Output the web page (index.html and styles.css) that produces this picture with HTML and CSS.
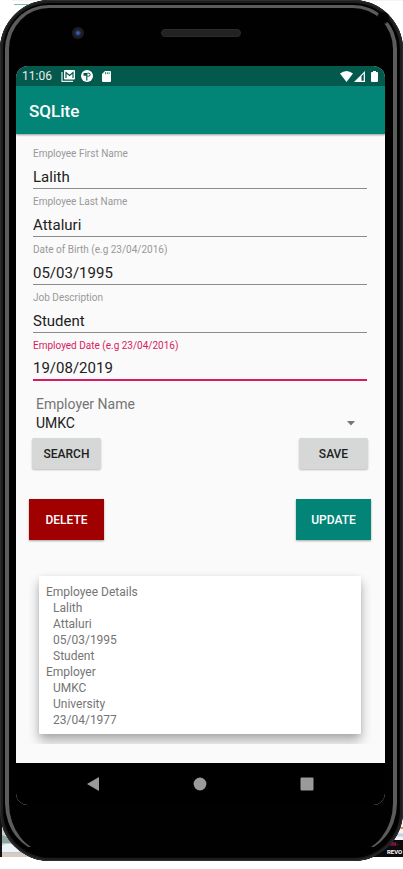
FILE: index.html
```html
<!DOCTYPE html>
<html lang="en">
<head>
<meta charset="utf-8">
<meta name="viewport" content="width=device-width, initial-scale=1">
<title>SQLite</title>
<link rel="stylesheet" href="styles.css">
</head>
<body>
<div class="stage">
  <div class="backdrop-top" aria-hidden="true"></div>
  <svg class="backdrop backdrop-left" width="45" height="42" viewBox="0 0 45 42" aria-hidden="true">
    <rect width="2" height="42" fill="#111"/>
    <rect x="2" width="43" height="42" fill="#c9cfce"/>
    <path d="M2 20l10 4 8 10H2z" fill="#8fa69b"/>
    <path d="M2 28h43v14H2z" fill="#b9c9dc"/>
    <path d="M2 30q12-4 24 4l-8 3H2z" fill="#eef3f6"/>
    <path d="M2 38h28v4H2z" fill="#d9c9be"/>
  </svg>
  <svg class="backdrop backdrop-right" width="45" height="42" viewBox="0 0 45 42" aria-hidden="true">
    <rect width="45" height="25" fill="#f4f4f6"/>
    <path d="M37 13h8" stroke="#e08a63" stroke-width="2"/>
    <path d="M34 20h11" stroke="#bcd3ea" stroke-width="3"/>
    <rect y="25" width="45" height="17" fill="#0c0a0d"/>
    <text x="32" y="31" class="poster pink">IN-</text>
    <text x="29" y="39" class="poster">REVO</text>
  </svg>
  <div class="phone">
    <div class="rim" aria-hidden="true"></div>
    <div class="bezel" aria-hidden="true">
      <span class="camera"></span>
      <span class="speaker"></span>
      <span></span>
    </div>
    <div class="screen">
      <div class="status">
        <span class="clock">11:06</span>
        <svg width="14" height="12" viewBox="0 0 14 12" aria-hidden="true">
          <path d="M1 2v9.300h11" fill="none" stroke="#e6efed" stroke-width="1.200"/>
          <rect x="3" y="0" width="11" height="9.500" rx="1" fill="#fff"/>
          <path d="M5 8V2.500l3.500 3 3.500-3V8" fill="none" stroke="#04594d" stroke-width="1.200"/>
        </svg>
        <svg width="12" height="12" viewBox="0 0 12 12" aria-hidden="true">
          <circle cx="6" cy="6" r="6" fill="#fff"/>
          <path d="M2.500 3h2.700v2.800H2.500zM5.200 3h1.200v7.500H5.200z" fill="#04594d"/>
          <path d="M6.400 3.200h1.300a1.500 1.500 0 0 1 0 3H6.400" fill="none" stroke="#04594d" stroke-width="1"/>
        </svg>
        <svg class="sd" width="9" height="11" viewBox="0 0 9 11" aria-hidden="true">
          <path d="M3 0h5a1 1 0 0 1 1 1v9a1 1 0 0 1-1 1H1a1 1 0 0 1-1-1V3z" fill="#fff"/>
          <path d="M3.500 1.200v2M5.300 1.200v2M7.100 1.200v2" stroke="#04594d" stroke-width=".8"/>
        </svg>
        <span class="spacer"></span>
        <svg width="13" height="11" viewBox="0 0 13 11" aria-hidden="true"><path d="M0 2.500Q6.500-2.500 13 2.500L6.500 11z" fill="#fff"/></svg>
        <svg class="signal" width="11" height="11" viewBox="0 0 11 11" aria-hidden="true">
          <path d="M0 11L11 0v11z" fill="#fff"/><path d="M7.500 4.900L9.700 2.700v7H7.500z" fill="#04594d"/>
        </svg>
        <svg width="7" height="11" viewBox="0 0 7 11" aria-hidden="true"><path d="M2 0h3v1h1a1 1 0 0 1 1 1v8a1 1 0 0 1-1 1H1a1 1 0 0 1-1-1V2a1 1 0 0 1 1-1h1z" fill="#fff"/></svg>
      </div>
      <header class="appbar"><h1>SQLite</h1></header>
      <main class="content">
        <form class="form">
          <div class="field"><label for="first">Employee First Name</label><input id="first" type="text" value="Lalith"></div>
          <div class="field"><label for="last">Employee Last Name</label><input id="last" type="text" value="Attaluri"></div>
          <div class="field"><label for="dob">Date of Birth (e.g 23/04/2016)</label><input id="dob" type="text" value="05/03/1995"></div>
          <div class="field"><label for="job">Job Description</label><input id="job" type="text" value="Student"></div>
          <div class="field active"><label for="employed">Employed Date (e.g 23/04/2016)</label><input id="employed" type="text" value="19/08/2019"></div>
          <div class="picker">
            <label for="employer">Employer Name</label>
            <div class="select-row">
              <select id="employer"><option>UMKC</option></select>
              <svg width="8" height="5" viewBox="0 0 8 5" aria-hidden="true"><path d="M0 0h8L4 4.500z" fill="#757575"/></svg>
            </div>
          </div>
          <div class="row">
            <button type="button" class="plain">SEARCH</button>
            <button type="button" class="plain">SAVE</button>
          </div>
        </form>
        <div class="row actions">
          <button type="button" class="solid delete">DELETE</button>
          <button type="button" class="solid update">UPDATE</button>
        </div>
        <div class="card-wrap">
          <section class="card">
            <p>Employee Details</p>
            <p class="item">Lalith</p>
            <p class="item">Attaluri</p>
            <p class="item">05/03/1995</p>
            <p class="item">Student</p>
            <p>Employer</p>
            <p class="item">UMKC</p>
            <p class="item">University</p>
            <p class="item">23/04/1977</p>
          </section>
        </div>
      </main>
      <nav class="navbar">
        <button type="button" aria-label="Back"><svg width="14" height="14" viewBox="0 0 14 14"><path d="M13 0v14L1 7z" fill="#9a9a9a"/></svg></button>
        <button type="button" aria-label="Home"><svg width="14" height="14" viewBox="0 0 14 14"><circle cx="7" cy="7" r="6.400" fill="#9a9a9a"/></svg></button>
        <button type="button" aria-label="Recent apps"><svg width="14" height="14" viewBox="0 0 14 14"><rect x=".5" y=".5" width="13" height="13" rx="1" fill="#9a9a9a"/></svg></button>
      </nav>
    </div>
  </div>
</div>
</body>
</html>
```
FILE: styles.css
```css
* { box-sizing: border-box; }
body { margin: 0; background: #fff; font-family: Roboto, "Liberation Sans", sans-serif; }
h1, p { margin: 0; font-weight: 400; }
svg { display: block; flex: none; }
button, input, select { font-family: inherit; border: 0; padding: 0; margin: 0; }

.stage { position: relative; }
.backdrop-top {
  position: absolute; top: 0; left: 12px; right: 0; height: 6px;
  background:
    linear-gradient(#7fb9b4, #7fb9b4) 2px 4px / 14px 1px no-repeat,
    linear-gradient(#f4f4f4, #f4f4f4) 0 0 / 100% 1px no-repeat;
}
.backdrop { position: absolute; bottom: 4px; }
.backdrop-left { left: 0; }
.backdrop-right { right: 0; }
.poster { font: 700 6px Roboto, sans-serif; fill: #fff; }
.poster.pink { fill: #a3204f; }

.phone {
  position: relative;
  padding: 0 18px 56px 16px;
  background: #010101;
  border-radius: 50px;
  box-shadow: inset 0 0 0 1px #2e2e2e, inset 0 0 0 3px #1d1d1d, inset 0 0 0 4px #050505;
}
.rim {
  position: absolute; inset: 5px 6px 8px 5px;
  border: 4px solid #5c5c5c;
  border-top-width: 3px;
  border-bottom: 1px solid transparent;
  border-radius: 44px 44px 44px 44px / 44px 44px 50px 50px;
  pointer-events: none;
}
.rim::after {
  content: ""; position: absolute; top: 3px; right: 3px; width: 14px; height: 14px;
  background: radial-gradient(circle, #010101 5px, transparent 7px);
}
.bezel {
  display: grid; grid-template-columns: 1fr 80px 1fr; align-items: center;
  height: 66px; padding-right: 2px;
  padding-left: 2px;
}
.camera {
  width: 12px; height: 12px; margin-left: 54px; border-radius: 50%;
  background: radial-gradient(circle, #3f5aa0 0 1px, #1b2340 3px, #1d1d20 4px);
}
.speaker { height: 8px; border-radius: 4px; background: #222; border: 1px solid #2c2c2c; }

.screen { position: relative; border-radius: 12px; overflow: hidden; background: #fafafa; }
.status {
  display: flex; align-items: center; height: 20px; padding: 0 7px 0 6px;
  background: #04594d; color: #e6efed; font-size: 12px; line-height: 20px;
}
.clock { margin-right: 9px; }
.status svg + svg { margin-left: 6px; }
.status .sd { margin-left: 9px; }
.spacer { flex: 1; }
.status svg + .signal { margin-left: 1px; }

.appbar {
  display: flex; align-items: center; height: 48px; padding: 2px 13px 0;
  background: #028577; color: #fff; box-shadow: 0 1px 2px rgba(0, 0, 0, .4);
}
.appbar h1 { font-size: 17px; line-height: 24px; font-weight: 500; }

.content { padding: 13px 14px 19px 13px; }
.form { padding: 0 3px; }
.field { display: flex; flex-direction: column; height: 48px; padding: 0 1px; }
.field label { height: 14px; font-size: 10px; line-height: 14px; color: #999; }
.field input {
  width: 100%; height: 28px; padding-top: 4px; background: none;
  border-bottom: 1px solid #8c8c8c; border-radius: 0;
  font-size: 15px; line-height: 20px; color: #212121; outline: 0;
}
.field.active label { color: #d81b60; }
.field.active input { height: 28px; border-bottom: 2px solid #d81b60; }

.picker { padding: 8px 4px 0; }
.picker label { display: block; font-size: 14px; line-height: 18px; color: #757575; }
.select-row { display: flex; align-items: center; height: 20px; }
.select-row select {
  flex: 1; appearance: none; background: none; font-size: 14px; line-height: 20px; color: #212121; outline: 0;
}
.select-row svg { margin-right: 9px; }

.row { display: flex; justify-content: space-between; }
.form .row { padding-top: 5px; }
.plain {
  width: 69px; height: 31px; border-radius: 2px; background: #d6d7d7; color: #212121;
  font-size: 12px; font-weight: 500; box-shadow: 0 1px 2px rgba(0, 0, 0, .25);
}
.actions { padding-top: 30px; }
.solid {
  width: 75px; height: 41px; color: #fff; font-size: 12px; font-weight: 500;
  box-shadow: 0 1px 2px rgba(0, 0, 0, .35);
}
.delete { background: #a00000; }
.update { background: #028577; }

.card-wrap { margin-top: 26px; padding: 10px; overflow: hidden; }
.card {
  padding: 8px 7px 6px; border-radius: 1px; background: #fff; color: #757575;
  font-size: 12px; line-height: 16px;
  box-shadow: 0 7px 12px rgba(0, 0, 0, .3), 0 1px 4px rgba(0, 0, 0, .08);
}
.item { padding-left: 7px; }

.navbar {
  display: grid; grid-template-columns: repeat(3, 107px); justify-content: center;
  height: 42px; padding-right: 2px; background: #000;
}
.navbar button { display: grid; place-items: center; background: none; }
```
